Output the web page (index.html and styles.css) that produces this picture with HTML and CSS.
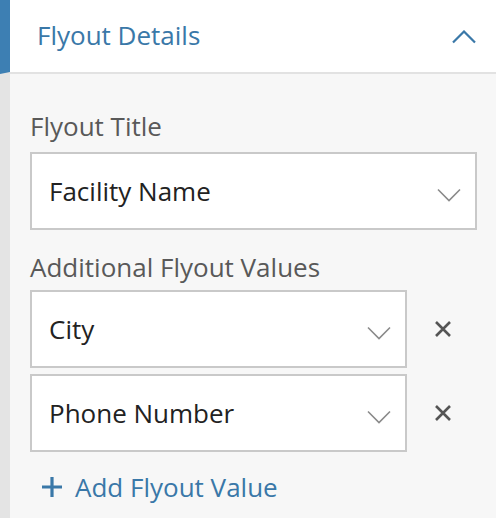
FILE: index.html
```html
<!DOCTYPE html>
<html>
<head>
<meta charset="utf-8">
<link rel="stylesheet" href="styles.css">
</head>
<body>
<div class="panel">
  <div class="header">
    <span class="title">Flyout Details</span>
    <svg class="collapse" width="24" height="14" viewBox="0 0 24 14"><path d="M1 12.5 L12 1.5 L23 12.5" fill="none" stroke="#3a78a8" stroke-width="2.2"/></svg>
  </div>
  <div class="body">
    <div class="label">Flyout Title</div>
    <div class="select full">
      <span>Facility Name</span>
      <svg class="chev" width="24" height="14" viewBox="0 0 24 14"><path d="M1 1.5 L12 12.5 L23 1.5" fill="none" stroke="#8a8a8a" stroke-width="1.6"/></svg>
    </div>
    <div class="label second">Additional Flyout Values</div>
    <div class="rows">
      <div class="row">
        <div class="select">
          <span>City</span>
          <svg class="chev" width="24" height="14" viewBox="0 0 24 14"><path d="M1 1.5 L12 12.5 L23 1.5" fill="none" stroke="#8a8a8a" stroke-width="1.6"/></svg>
        </div>
        <svg class="remove" width="18" height="18" viewBox="0 0 18 18"><path d="M2 2 L16 16 M16 2 L2 16" stroke="#555" stroke-width="2.6" fill="none"/></svg>
      </div>
      <div class="row">
        <div class="select">
          <span>Phone Number</span>
          <svg class="chev" width="24" height="14" viewBox="0 0 24 14"><path d="M1 1.5 L12 12.5 L23 1.5" fill="none" stroke="#8a8a8a" stroke-width="1.6"/></svg>
        </div>
        <svg class="remove" width="18" height="18" viewBox="0 0 18 18"><path d="M2 2 L16 16 M16 2 L2 16" stroke="#555" stroke-width="2.6" fill="none"/></svg>
      </div>
    </div>
    <div class="add">
      <svg width="22" height="22" viewBox="0 0 22 22"><path d="M11 1 V21 M1 11 H21" stroke="#3a78a8" stroke-width="3.2" fill="none"/></svg>
      <span>Add Flyout Value</span>
    </div>
  </div>
</div>
</body>
</html>
```

FILE: styles.css
```css
* { box-sizing: border-box; }
html, body { margin: 0; padding: 0; }
body {
  width: 496px;
  height: 518px;
  overflow: hidden;
  font-family: "Open Sans", "Noto Sans", sans-serif;
  background: #f7f7f7;
}
.panel {
  display: flex;
  flex-direction: column;
  height: 518px;
  border-left: 10px solid #e4e4e4;
}
.header {
  height: 74px;
  background: #fff;
  border-bottom: 2px solid #e2e2e2;
  display: flex;
  align-items: center;
  justify-content: space-between;
  margin-left: -10px;
  padding: 0 20px 0 27px;
  border-left: 10px solid #3d7fb3;
}
.title {
  color: #3a78a8;
  font-size: 26px;
  line-height: 34px;
  margin-top: -2px;
}
.collapse { margin-top: 2px; }
.body {
  flex: 1;
  padding: 35px 19px 0 20px;
}
.label {
  color: #595959;
  font-size: 26px;
  line-height: 34px;
  margin-bottom: 9px;
}
.label.second { margin-top: 20px; margin-bottom: 6px; }
.rows {
  display: flex;
  flex-direction: column;
  gap: 6px;
}
.row {
  display: flex;
  align-items: center;
}
.select {
  background: #fff;
  border: 2px solid #c9c9c9;
  height: 78px;
  display: flex;
  align-items: center;
  justify-content: space-between;
  padding: 0 14px 0 17px;
  font-size: 26px;
  line-height: 34px;
  color: #222;
  width: 377px;
}
.select.full { width: 447px; }
.chev { margin-top: 7px; }
.remove { margin-left: 27px; }
.add {
  display: flex;
  align-items: center;
  gap: 12px;
  margin-top: 18px;
  margin-left: 11px;
  color: #3a78a8;
  font-size: 26px;
  line-height: 34px;
}
```
